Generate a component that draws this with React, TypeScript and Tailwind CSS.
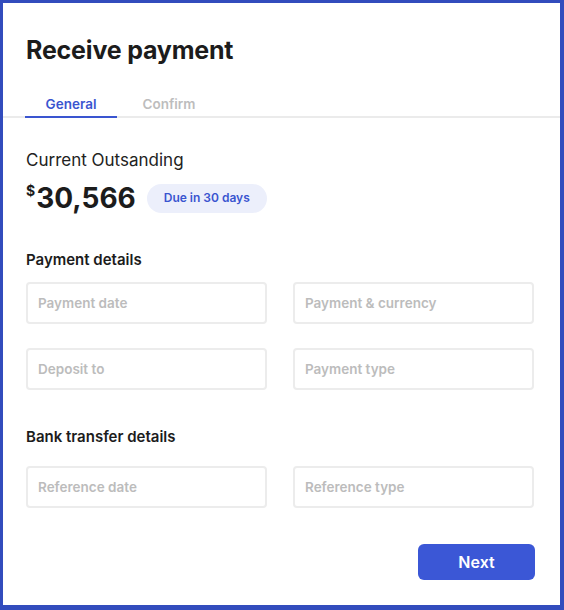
import React from "react";

function Field({ label }: { label: string }) {
  return (
    <div className="h-[42px] rounded-[4px] border-2 border-[#ececec] flex items-center px-[10px] text-[13.5px] font-semibold text-[#bcbcbc]">
      {label}
    </div>
  );
}

export default function App() {
  return (
    <div
      className="w-[564px] h-[610px] bg-[#324cbd] pl-[3px] pt-[3px] pr-[4px] pb-[5px]"
      style={{ fontFamily: "Inter, 'Noto Sans', sans-serif" }}
    >
      <div className="w-full h-full bg-white flex flex-col">
        <div className="pl-[23px] pt-[31px]">
          <h1 className="text-[25px] font-bold text-[#1c1c1c] leading-[32px] tracking-[-0.2px]">Receive payment</h1>
        </div>
        <div className="mt-[28px] border-b-2 border-[#ebebeb] flex pl-[22px]">
          <div className="w-[92px] text-center text-[13.5px] font-semibold text-[#3a55d0] pb-[2px] border-b-2 border-[#3a55d0] -mb-[2px]">
            General
          </div>
          <div className="ml-[8px] w-[88px] text-center text-[13.5px] font-semibold text-[#bdbdbd] pb-[2px]">
            Confirm
          </div>
        </div>
        <div className="px-[23px]">
          <div className="mt-[31px] text-[17px] text-[#222] leading-[22px]">Current Outsanding</div>
          <div className="mt-[10px] flex items-center">
            <div className="flex items-start text-[#1c1c1c] font-bold">
              <span className="text-[14px] leading-[16px] mt-[2px] mr-[1px]">$</span>
              <span className="text-[28px] leading-[34px]">30,566</span>
            </div>
            <div className="ml-[11px] h-[29px] w-[120px] rounded-[15px] bg-[#eceffb] text-[#3a55d0] text-[12px] font-semibold flex items-center justify-center">
              Due in 30 days
            </div>
          </div>
          <div className="mt-[35px] text-[15px] font-semibold text-[#1c1c1c] leading-[20px]">Payment details</div>
          <div className="mt-[12px] grid grid-cols-2 gap-x-[26px] gap-y-[24px] pr-[3px]">
            <Field label="Payment date" />
            <Field label="Payment & currency" />
            <Field label="Deposit to" />
            <Field label="Payment type" />
          </div>
          <div className="mt-[37px] text-[15px] font-semibold text-[#1c1c1c] leading-[20px]">Bank transfer details</div>
          <div className="mt-[19px] grid grid-cols-2 gap-x-[26px] pr-[3px]">
            <Field label="Reference date" />
            <Field label="Reference type" />
          </div>
          <div className="mt-[36px] flex justify-end pr-[2px]">
            <button className="w-[117px] h-[36px] rounded-[6px] bg-[#3b57d6] text-white text-[16px] font-semibold">
              Next
            </button>
          </div>
        </div>
      </div>
    </div>
  );
}
